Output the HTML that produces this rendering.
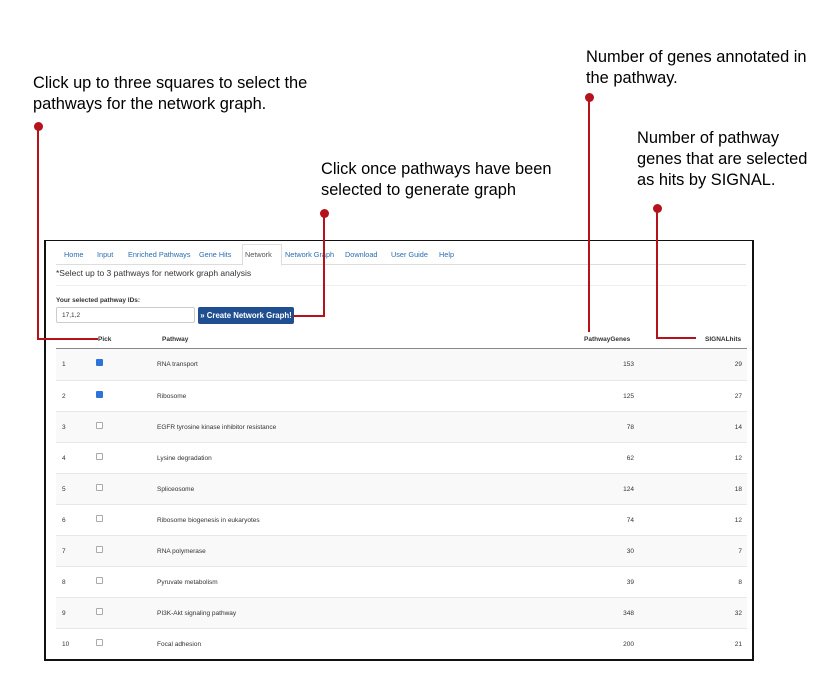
<!DOCTYPE html>
<html><head><style>
body{margin:0;width:826px;height:674px;background:#fff;font-family:"Liberation Sans",Arial,sans-serif;position:relative;overflow:hidden}
.a{position:absolute;font-size:16.4px;line-height:21px;color:#000}
.box{position:absolute;left:44px;top:240px;width:706px;height:418px;border:2px solid #111;border-top-width:1px;background:#fff}
.tabs{position:absolute;left:10px;top:0;width:690px;height:23px;border-bottom:1px solid #ddd;font-size:7.3px}
.tab{position:absolute;top:9px;color:#2a6db0}
.act{position:absolute;left:186px;top:3px;width:38px;height:20px;border:1px solid #ddd;border-bottom:1px solid #fff;background:#fff}
.sm{position:absolute;font-size:8px;color:#333}
.row{position:absolute;left:10px;width:691px;height:31px;font-size:6.5px;color:#333}
.row span{position:absolute;top:12px}
.cb{position:absolute;left:40px;top:10px;width:5px;height:5px;border:1px solid #aaa;border-radius:1px;background:#fff}
.cb.on{background:#2d74da;border-color:#2d74da}
.r{position:absolute;background:#b5121b}
.dot{position:absolute;width:9px;height:9px;border-radius:50%;background:#b5121b}
</style></head><body>
<div class="a" style="left:33px;top:73px">Click up to three squares to select the<br>pathways for the network graph.</div>
<div class="a" style="left:321px;top:159px">Click once pathways have been<br>selected to generate graph</div>
<div class="a" style="left:586px;top:47px">Number of genes annotated in<br>the pathway.</div>
<div class="a" style="left:637px;top:128px">Number of pathway<br>genes that are selected<br>as hits by SIGNAL.</div>
<div class="box">
<div class="tabs">
<div class="act"></div>
<span class="tab" style="left:8px">Home</span>
<span class="tab" style="left:41px">Input</span>
<span class="tab" style="left:72px">Enriched Pathways</span>
<span class="tab" style="left:143px">Gene Hits</span>
<span class="tab" style="left:189px;color:#555">Network</span>
<span class="tab" style="left:229px">Network Graph</span>
<span class="tab" style="left:289px">Download</span>
<span class="tab" style="left:335px">User Guide</span>
<span class="tab" style="left:383px">Help</span>
</div>
<div class="sm" style="left:10px;top:27px;font-size:8.5px">*Select up to 3 pathways for network graph analysis</div>
<div style="position:absolute;left:10px;top:44px;width:691px;height:1px;background:#eee"></div>
<div class="sm" style="left:10px;top:56px;font-size:6.5px;font-weight:bold">Your selected pathway IDs:</div>
<div style="position:absolute;left:10px;top:66px;width:139px;height:16px;border:1px solid #ccc;border-radius:2px;font-size:6.5px;color:#333;line-height:16px;padding-left:5px;box-sizing:border-box">17,1,2</div>
<div style="position:absolute;left:152px;top:66px;width:96px;height:17px;background:#1f4e91;border-radius:2px;color:#fff;font-size:7.8px;font-weight:bold;line-height:17px;text-align:center">» Create Network Graph!</div>
<div class="sm" style="left:52px;top:95px;font-size:6.5px;font-weight:bold">Pick</div>
<div class="sm" style="left:116px;top:95px;font-size:6.5px;font-weight:bold">Pathway</div>
<div class="sm" style="left:538px;top:95px;font-size:6.5px;font-weight:bold">PathwayGenes</div>
<div class="sm" style="left:659px;top:95px;font-size:6.5px;font-weight:bold">SIGNALhits</div>
<div style="position:absolute;left:10px;top:107px;width:691px;height:1px;background:#888"></div>
<div class="row" style="top:108px;background:#f9f9f9"><span style="left:6px">1</span><div class="cb on"></div><span style="left:101px">RNA transport</span><span style="right:113px">153</span><span style="right:5px">29</span></div>
<div class="row" style="top:139px;border-top:1px solid #e8e8e8"><span style="left:6px">2</span><div class="cb on"></div><span style="left:101px">Ribosome</span><span style="right:113px">125</span><span style="right:5px">27</span></div>
<div class="row" style="top:170px;background:#f9f9f9;border-top:1px solid #e8e8e8"><span style="left:6px">3</span><div class="cb"></div><span style="left:101px">EGFR tyrosine kinase inhibitor resistance</span><span style="right:113px">78</span><span style="right:5px">14</span></div>
<div class="row" style="top:201px;border-top:1px solid #e8e8e8"><span style="left:6px">4</span><div class="cb"></div><span style="left:101px">Lysine degradation</span><span style="right:113px">62</span><span style="right:5px">12</span></div>
<div class="row" style="top:232px;background:#f9f9f9;border-top:1px solid #e8e8e8"><span style="left:6px">5</span><div class="cb"></div><span style="left:101px">Spliceosome</span><span style="right:113px">124</span><span style="right:5px">18</span></div>
<div class="row" style="top:263px;border-top:1px solid #e8e8e8"><span style="left:6px">6</span><div class="cb"></div><span style="left:101px">Ribosome biogenesis in eukaryotes</span><span style="right:113px">74</span><span style="right:5px">12</span></div>
<div class="row" style="top:294px;background:#f9f9f9;border-top:1px solid #e8e8e8"><span style="left:6px">7</span><div class="cb"></div><span style="left:101px">RNA polymerase</span><span style="right:113px">30</span><span style="right:5px">7</span></div>
<div class="row" style="top:325px;border-top:1px solid #e8e8e8"><span style="left:6px">8</span><div class="cb"></div><span style="left:101px">Pyruvate metabolism</span><span style="right:113px">39</span><span style="right:5px">8</span></div>
<div class="row" style="top:356px;background:#f9f9f9;border-top:1px solid #e8e8e8"><span style="left:6px">9</span><div class="cb"></div><span style="left:101px">PI3K-Akt signaling pathway</span><span style="right:113px">348</span><span style="right:5px">32</span></div>
<div class="row" style="top:387px;border-top:1px solid #e8e8e8"><span style="left:6px">10</span><div class="cb"></div><span style="left:101px">Focal adhesion</span><span style="right:113px">200</span><span style="right:5px">21</span></div>
</div>
<div class="dot" style="left:34px;top:122px"></div>
<div class="r" style="left:37px;top:126px;width:2px;height:214px"></div>
<div class="r" style="left:37px;top:338px;width:61px;height:2px"></div>
<div class="dot" style="left:320px;top:209px"></div>
<div class="r" style="left:323px;top:213px;width:2px;height:104px"></div>
<div class="r" style="left:293px;top:315px;width:32px;height:2px"></div>
<div class="dot" style="left:585px;top:93px"></div>
<div class="r" style="left:588px;top:97px;width:2px;height:235px"></div>
<div class="dot" style="left:653px;top:204px"></div>
<div class="r" style="left:656px;top:208px;width:2px;height:131px"></div>
<div class="r" style="left:656px;top:337px;width:40px;height:2px"></div>
</body></html>
